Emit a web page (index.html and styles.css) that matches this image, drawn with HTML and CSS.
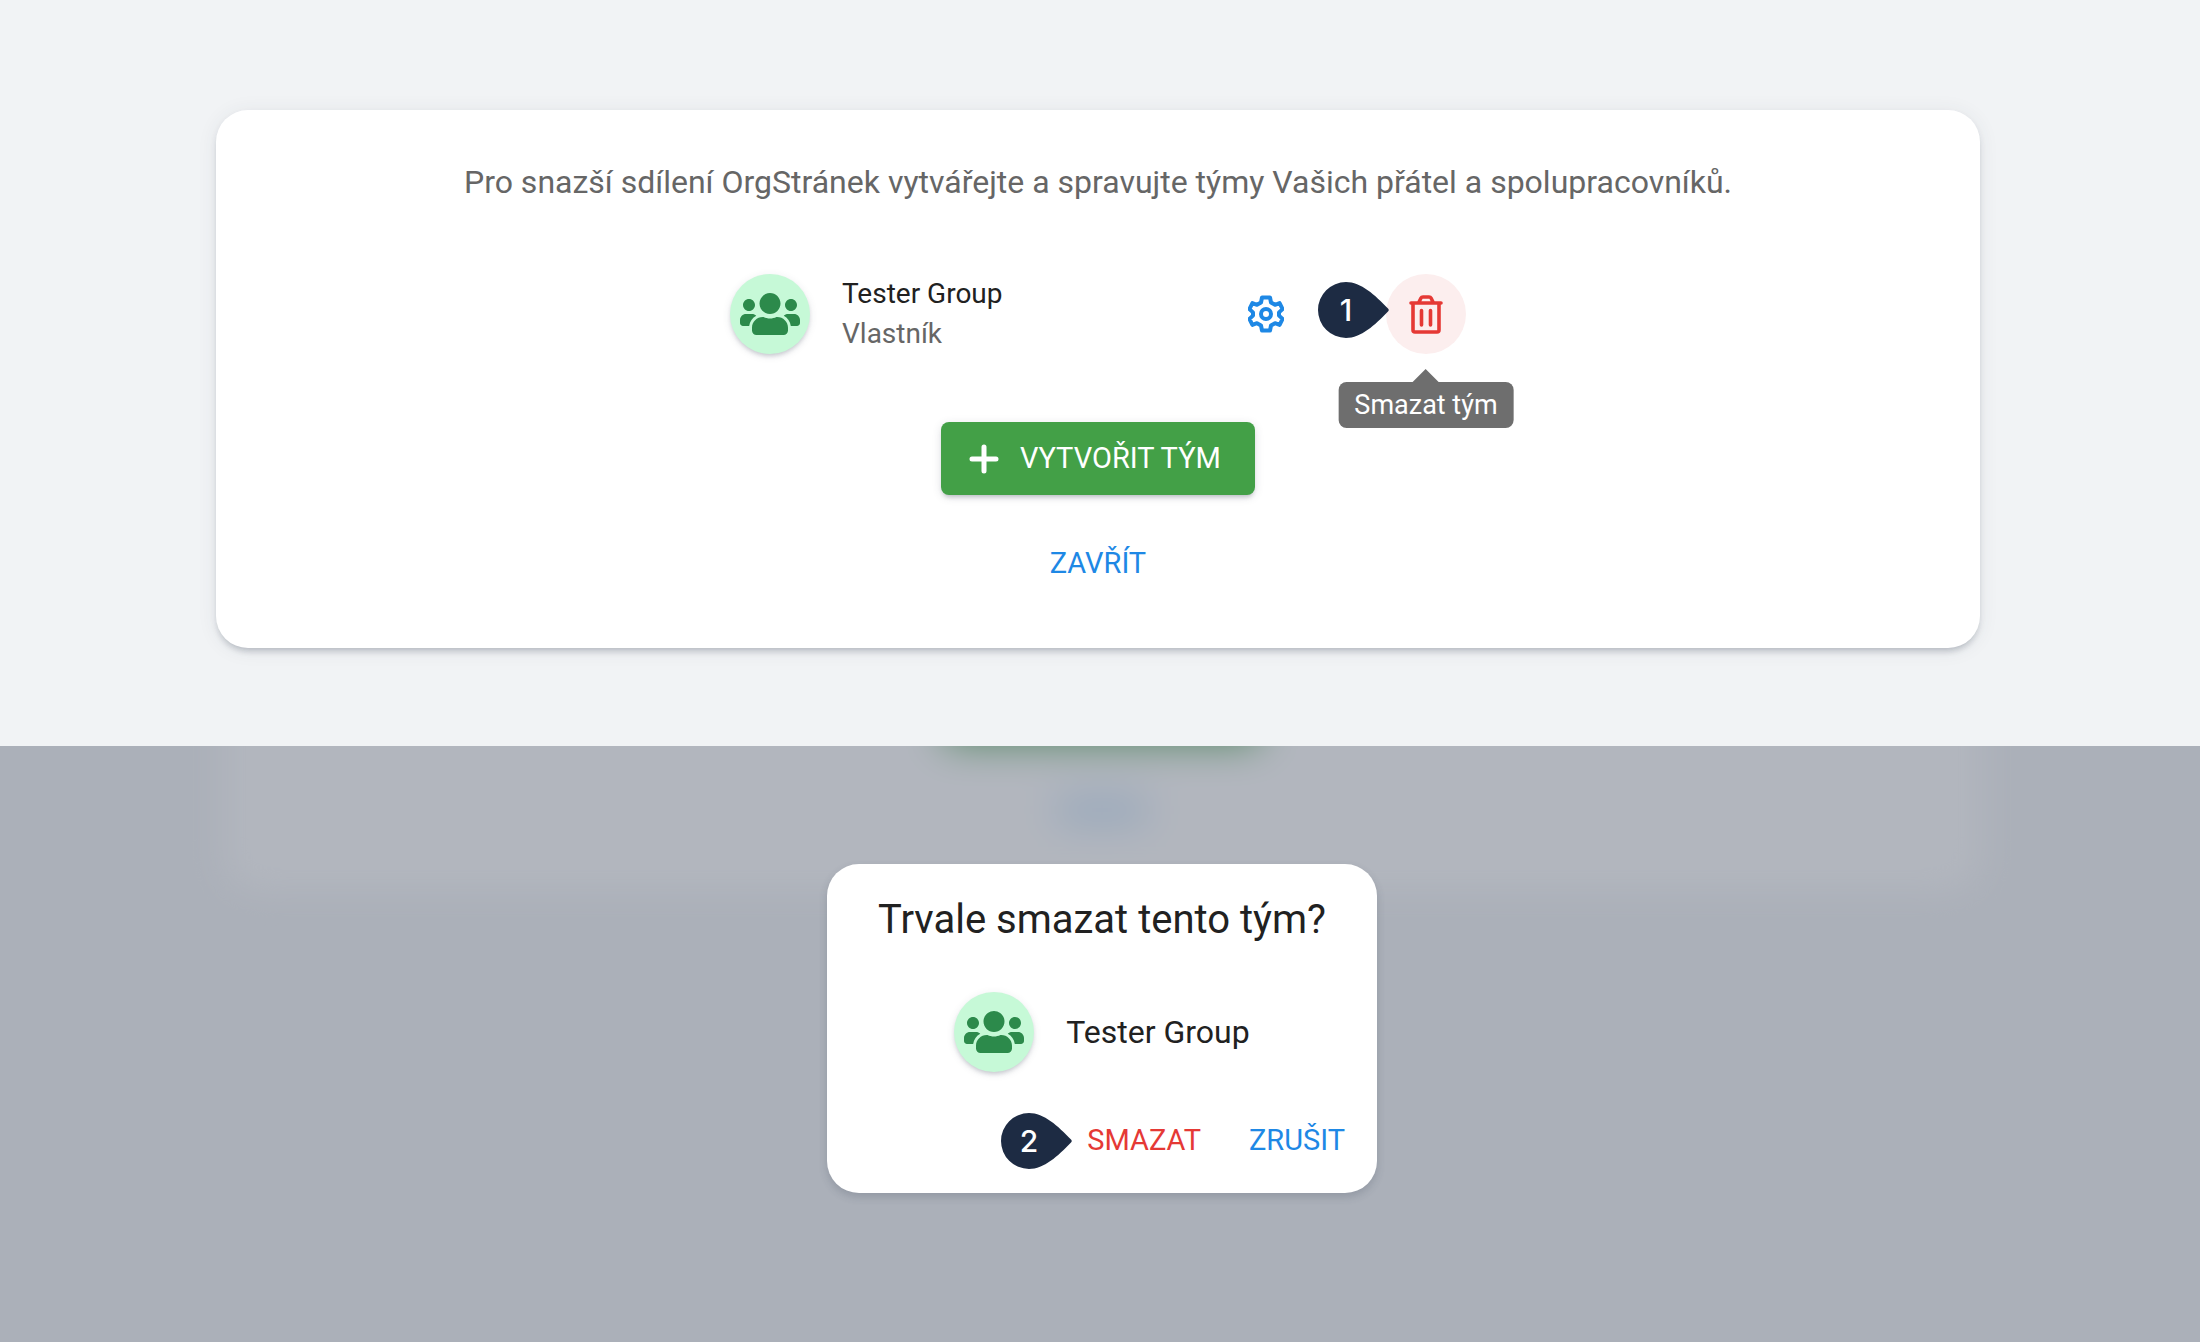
FILE: index.html
```html
<!DOCTYPE html>
<html lang="cs">
<head>
    <meta charset="UTF-8">
    <meta name="viewport" content="width=device-width, initial-scale=1.0">
    <title>Týmy</title>
    <link rel="stylesheet" href="styles.css">
</head>
<body>
    <svg class="sprite" aria-hidden="true">
        <symbol id="users" viewBox="0 0 640 512">
            <path d="M96 224c35.3 0 64-28.7 64-64s-28.7-64-64-64-64 28.7-64 64 28.7 64 64 64zm448 0c35.3 0 64-28.7 64-64s-28.7-64-64-64-64 28.7-64 64 28.7 64 64 64zm32 32h-64c-17.6 0-33.5 7.1-45.1 18.6 40.3 22.1 68.9 62 75.1 109.4h66c17.7 0 32-14.3 32-32v-32c0-35.3-28.7-64-64-64zm-256 0c61.9 0 112-50.1 112-112S381.9 32 320 32 208 82.1 208 144s50.1 112 112 112zm76.8 32h-8.3c-20.8 10-43.9 16-68.5 16s-47.6-6-68.5-16h-8.3C179.6 288 128 339.6 128 403.2V432c0 26.5 21.5 48 48 48h288c26.5 0 48-21.5 48-48v-28.8c0-63.6-51.6-115.2-115.2-115.2zm-223.7-13.4C161.5 263.1 145.6 256 128 256H64c-35.3 0-64 28.7-64 64v32c0 17.7 14.3 32 32 32h65.9c6.3-47.4 34.9-87.3 75.2-109.4z"/>
        </symbol>
        <symbol id="pin" viewBox="0 0 71 56">
            <path d="M28 0C43 0 57 13 70 26.500Q71.500 28 70 29.500C57 43 43 56 28 56A28 28 0 0 1 28 0z"/>
        </symbol>
    </svg>

    <main>
        <section class="page">
            <div class="card">
                <p class="intro">Pro snazší sdílení OrgStránek vytvářejte a spravujte týmy Vašich přátel a spolupracovníků.</p>

                <div class="team">
                    <span class="avatar"><svg><use href="#users"/></svg></span>
                    <div class="team-text">
                        <span class="team-name">Tester Group</span>
                        <span class="team-role">Vlastník</span>
                    </div>
                    <button type="button" class="icon-btn icon-btn-settings" aria-label="Nastavení týmu">
                        <svg viewBox="0 0 36 38" width="36" height="38" fill="none" stroke="currentColor" stroke-width="4" stroke-linejoin="round">
                            <path d="M14 2.500h8l1 5 4 2.300 4.600-1.700 3 6-3.600 3.300v3.200l3.600 3.300-3 6-4.600-1.700-4 2.300-1 5h-8l-1-5-4-2.300-4.600 1.700-3-6L5 20.600v-3.200l-3.600-3.300 3-6L9 9.800l4-2.300z"/>
                            <circle cx="18" cy="19" r="5"/>
                        </svg>
                    </button>
                    <button type="button" class="icon-btn icon-btn-delete" aria-label="Smazat" aria-describedby="tip">
                        <svg viewBox="0 0 34 39" width="34" height="39" fill="none" stroke="currentColor" stroke-width="3.600" stroke-linejoin="round" stroke-linecap="round">
                            <path d="M2 8h30M4 8v27a2 2 0 0 0 2 2h22a2 2 0 0 0 2-2V8M10 7l2-4q.5-1 2-1h6q1.500 0 2 1l2 4M12.500 15.500v14.500M21.500 15.500v14.500"/>
                        </svg>
                    </button>
                    <span class="marker marker-team"><svg><use href="#pin"/></svg><b>1</b></span>
                    <span class="tooltip" id="tip" role="tooltip">Smazat tým</span>
                </div>

                <button type="button" class="btn btn-primary">
                    <svg viewBox="0 0 30 30" width="30" height="30" fill="none" stroke="currentColor" stroke-width="5" stroke-linecap="round"><path d="M15 3v24M3 15h24"/></svg>
                    VYTVOŘIT TÝM
                </button>
                <button type="button" class="btn btn-text">ZAVŘÍT</button>
            </div>
        </section>

        <section class="overlay">
            <!-- rozmazaná stránka pod dialogem -->
            <div class="backdrop" aria-hidden="true">
                <div class="backdrop-card">
                    <div class="backdrop-btn"></div>
                    <div class="backdrop-link"></div>
                </div>
            </div>

            <div class="dialog" role="dialog" aria-labelledby="dialog-title">
                <h2 id="dialog-title">Trvale smazat tento tým?</h2>
                <div class="dialog-team">
                    <span class="avatar"><svg><use href="#users"/></svg></span>
                    <span>Tester Group</span>
                </div>
                <div class="dialog-actions">
                    <span class="marker marker-dialog"><svg><use href="#pin"/></svg><b>2</b></span>
                    <button type="button" class="btn btn-text btn-danger">SMAZAT</button>
                    <button type="button" class="btn btn-text">ZRUŠIT</button>
                </div>
            </div>
        </section>
    </main>
</body>
</html>
```
FILE: styles.css
```css
* { box-sizing: border-box; }

body {
    margin: 0;
    font-family: Roboto, "Liberation Sans", sans-serif;
    font-size: 32px;
    line-height: 48px;
    color: #212121;
    background-color: #f1f3f5;
}

main {
    display: flex;
    flex-direction: column;
    min-height: 100vh;
}

.sprite {
    position: absolute;
    width: 0;
    height: 0;
}

/* --- Stránka s týmy --- */
.page { padding: 110px 220px 98px 216px; }

.card {
    display: flex;
    flex-direction: column;
    align-items: center;
    padding: 48px;
    border-radius: 32px;
    background-color: #fff;
    box-shadow: 0 6px 6px -4px rgba(50, 60, 80, 0.2), 0 4px 6px rgba(50, 60, 80, 0.1), 0 2px 20px rgba(50, 60, 80, 0.08);
}

.intro {
    margin: 0 0 68px;
    color: #666;
    text-align: center;
}

.team {
    position: relative;
    display: flex;
    align-items: center;
    width: 736px;
    max-width: 100%;
    height: 80px;
    margin-bottom: 68px;
    font-size: 28px;
    line-height: 40px;
}

.avatar {
    display: flex;
    align-items: center;
    justify-content: center;
    width: 80px;
    height: 80px;
    border-radius: 50%;
    background-color: #c6f9d7;
    box-shadow: 0 3px 4px -1px rgba(50, 60, 80, 0.22), 0 2px 8px rgba(50, 60, 80, 0.1);
}

.avatar svg {
    width: 60px;
    height: 48px;
    fill: #2c8a4b;
}

.team-text {
    display: flex;
    flex: 1;
    flex-direction: column;
    margin-left: 32px;
}

.team-role { color: #666; }

.icon-btn {
    display: flex;
    align-items: center;
    justify-content: center;
    width: 80px;
    height: 80px;
    padding: 0;
    border: 0;
    border-radius: 50%;
    background: none;
    cursor: pointer;
}

.icon-btn-settings {
    margin-right: 80px;
    color: #1e88e5;
}

.icon-btn-delete {
    color: #e53935;
    background-color: #fceeee;
}

.tooltip {
    position: absolute;
    top: 108px;
    right: 40px;
    padding: 3px 16px;
    border-radius: 8px;
    font-size: 27px;
    color: #fff;
    white-space: nowrap;
    background-color: #6e6e6e;
    transform: translateX(50%);
}

.tooltip::before {
    content: "";
    position: absolute;
    bottom: 100%;
    left: 50%;
    border: 13px solid transparent;
    border-top: 0;
    border-bottom-color: #6e6e6e;
    transform: translateX(-50%);
}

/* --- Číslované značky --- */
.marker {
    position: absolute;
    width: 71px;
    height: 56px;
    color: #fff;
}

.marker svg {
    display: block;
    width: 71px;
    height: 56px;
    fill: #1d2b43;
}

.marker b {
    position: absolute;
    top: 0;
    left: 0;
    width: 56px;
    font-family: Inter, sans-serif;
    font-size: 30px;
    font-weight: 500;
    line-height: 56px;
    text-align: center;
}

.marker-team {
    top: 8px;
    right: 77px;
}

/* --- Tlačítka --- */
.btn {
    display: inline-flex;
    align-items: center;
    border: 0;
    border-radius: 8px;
    font-family: inherit;
    font-size: 29px;
    font-weight: 400;
    line-height: 49px;
    cursor: pointer;
}

.btn-primary {
    gap: 21px;
    min-width: 314px;
    padding: 12px 28px;
    color: #fff;
    background-color: #43a047;
    box-shadow: 0 4px 4px -2px rgba(50, 60, 80, 0.25), 0 2px 10px rgba(50, 60, 80, 0.14);
}

.btn-text {
    padding: 12px 16px;
    color: #1e88e5;
    background: none;
}

.card .btn-text { margin-top: 32px; }

.btn-danger { color: #e53935; }

/* --- Dialog --- */
.overlay {
    position: relative;
    display: flex;
    flex: 1;
    flex-direction: column;
    align-items: center;
    padding: 118px 0 118px 4px;
    overflow: hidden;
}

.backdrop {
    position: absolute;
    inset: 0;
    padding: 0 216px 0 220px;
}

.backdrop::after {
    content: "";
    position: absolute;
    inset: 0;
    background-color: rgba(101, 109, 125, 0.5);
}

.backdrop-card {
    display: flex;
    flex-direction: column;
    align-items: center;
    height: 538px;
    margin-top: -388px;
    padding-top: 312px;
    border-radius: 32px;
    background-color: #fff;
    box-shadow: 0 4px 16px rgba(50, 60, 80, 0.1);
    filter: blur(20px);
}

.backdrop-btn {
    width: 314px;
    height: 73px;
    background-color: #43a047;
}

.backdrop-link {
    width: 90px;
    height: 20px;
    margin-top: 57px;
    background-color: rgba(30, 136, 229, 0.35);
}

.dialog {
    position: relative;
    width: 550px;
    padding: 24px 16px 16px;
    border-radius: 32px;
    background-color: #fff;
    box-shadow: 0 4px 8px rgba(50, 60, 80, 0.2);
}

.dialog h2 {
    margin: 0;
    font-size: 40px;
    font-weight: 400;
    line-height: 64px;
    text-align: center;
}

.dialog-team {
    display: flex;
    align-items: center;
    justify-content: center;
    gap: 32px;
    margin: 40px 0 32px;
}

.dialog-actions {
    display: flex;
    justify-content: flex-end;
    gap: 16px;
}

.marker-dialog {
    bottom: 24px;
    left: 174px;
}
```
